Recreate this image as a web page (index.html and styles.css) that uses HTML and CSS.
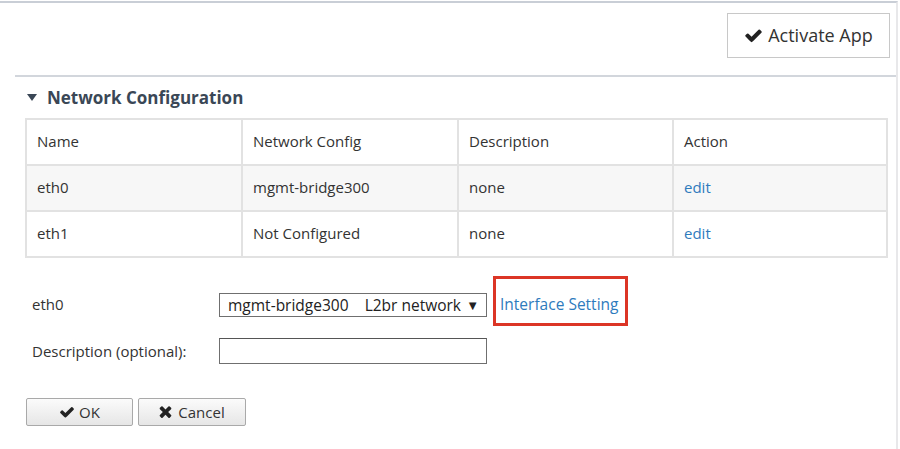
FILE: index.html
```html
<!DOCTYPE html>
<html>
<head>
<meta charset="utf-8">
<link rel="stylesheet" href="styles.css">
</head>
<body>
<div class="page">
  <div class="toolbar">
    <button class="activate"><svg class="chk" viewBox="0 0 1792 1792"><path d="M1671 566q0 40-28 68l-724 724-136 136q-28 28-68 28t-68-28l-136-136-362-362q-28-28-28-68t28-68l136-136q28-28 68-28t68 28l294 295 656-657q28-28 68-28t68 28l136 136q28 28 28 68z"/></svg>Activate App</button>
  </div>
  <div class="section">
    <div class="heading"><span class="tri"></span>Network Configuration</div>
    <table class="grid">
      <tr><td class="c1">Name</td><td class="c2">Network Config</td><td class="c3">Description</td><td>Action</td></tr>
      <tr class="alt"><td>eth0</td><td>mgmt-bridge300</td><td>none</td><td><a class="lnk">edit</a></td></tr>
      <tr><td>eth1</td><td>Not Configured</td><td>none</td><td><a class="lnk">edit</a></td></tr>
    </table>
    <div class="form">
      <div class="row r1">
        <div class="label">eth0</div>
        <div class="select"><span>mgmt-bridge300&nbsp;&nbsp;&nbsp;&nbsp;L2br network</span><span class="arrow">▼</span></div>
        <div class="hl"><a class="lnk">Interface Setting</a></div>
      </div>
      <div class="row r2">
        <div class="label">Description (optional):</div>
        <div class="input"></div>
      </div>
    </div>
    <div class="actions">
      <button class="btn ok"><svg class="ic" viewBox="0 0 1792 1792"><path d="M1671 566q0 40-28 68l-724 724-136 136q-28 28-68 28t-68-28l-136-136-362-362q-28-28-28-68t28-68l136-136q28-28 68-28t68 28l294 295 656-657q28-28 68-28t68 28l136 136q28 28 28 68z"/></svg>OK</button>
      <button class="btn cancel"><svg class="ic x" viewBox="100 240 1208 1320"><path d="M1298 1322q0 40-28 68l-136 136q-28 28-68 28t-68-28l-294-294-294 294q-28 28-68 28t-68-28l-136-136q-28-28-28-68t28-68l294-294-294-294q-28-28-28-68t28-68l136-136q28-28 68-28t68 28l294 294 294-294q28-28 68-28t68 28l136 136q28 28 28 68t-28 68l-294 294 294 294q28 28 28 68z"/></svg>Cancel</button>
    </div>
  </div>
</div>
</body>
</html>
```
FILE: styles.css
```css
* { box-sizing: border-box; }
html, body { margin: 0; padding: 0; background: #fff; }
body { font-family: "Open Sans", "Noto Sans", sans-serif; color: #333; }
.page {
  width: 898px;
  height: 449px;
  margin-top: 1px;
  border-top: 2px solid #c9ced6;
  border-right: 2px solid #e8e8ea;
}
.toolbar {
  height: 72px;
  display: flex;
  justify-content: flex-end;
  align-items: flex-start;
  padding: 10px 6px 0 0;
}
.activate {
  width: 163px;
  height: 45px;
  border: 1px solid #c8c8c8;
  background: #fff;
  font-family: inherit;
  font-size: 18px;
  color: #333;
  padding: 0 0 2px;
  display: flex;
  align-items: center;
  justify-content: center;
}
.chk { width: 19px; height: 19px; fill: #222; margin-right: 5px; margin-top: 1px; }
.section {
  margin-left: 15px;
  border-top: 2px solid #d2d6dc;
  padding: 0 0 0 10px;
}
.heading {
  height: 41px;
  display: flex;
  align-items: center;
  font-size: 17px;
  font-weight: bold;
  color: #3a4756;
  padding-left: 2px;
  padding-bottom: 1px;
}
.tri {
  width: 0; height: 0;
  border-left: 5px solid transparent;
  border-right: 5px solid transparent;
  border-top: 7px solid #3a4756;
  margin-right: 10px;
  margin-top: 1px;
}
.grid {
  width: 863px;
  border-collapse: collapse;
  font-size: 15px;
  color: #333;
}
.grid td {
  border: 2px solid #e2e2e2;
  height: 46px;
  padding: 0 0 2px 10px;
}
.grid .c1 { width: 216px; }
.grid .c2 { width: 216px; }
.grid .c3 { width: 215px; }
.grid tr.alt td { background: #f7f7f7; }
.lnk { color: #2e7bbd; text-decoration: none; }
.form {
  padding: 18px 0 0 7px;
  font-size: 15px;
  color: #333;
}
.row { display: flex; align-items: flex-start; }
.label { width: 187px; }
.r1 { height: 50px; }
.r1 .label { margin-top: 18px; }
.select {
  margin-top: 17px;
  width: 268px;
  height: 24px;
  border: 1px solid #6f6f6f;
  display: flex;
  align-items: center;
  justify-content: space-between;
  padding: 0 7px 1px 8px;
  white-space: nowrap;
  color: #222;
  font-size: 15.5px;
}
.arrow { font-size: 13px; color: #222; }
.hl {
  margin-left: 6px;
  border: 3px solid #dc3526;
  height: 50px;
  width: 135px;
  display: flex;
  align-items: center;
  padding-left: 4px;
  padding-top: 5px;
  font-size: 15.5px;
}
.r2 { height: 26px; margin-top: 12px; align-items: center; }
.input {
  width: 268px;
  height: 26px;
  border: 1px solid #6f6f6f;
  border-top-color: #555;
  background: #fff;
}
.actions {
  display: flex;
  gap: 5px;
  padding-top: 34px;
  padding-left: 1px;
}
.btn {
  height: 28px;
  border: 1px solid #a9a9a9;
  border-radius: 2px;
  background: linear-gradient(#fbfbfb, #e6e6e6);
  font-family: inherit;
  font-size: 15px;
  color: #333;
  display: flex;
  align-items: center;
  justify-content: center;
  padding: 0 0 1px;
}
.ok { width: 107px; }
.cancel { width: 108px; }
.ic { width: 16px; height: 16px; fill: #222; margin-right: 4px; }
.ic.x { width: 13px; height: 13px; margin-right: 6px; }
```
